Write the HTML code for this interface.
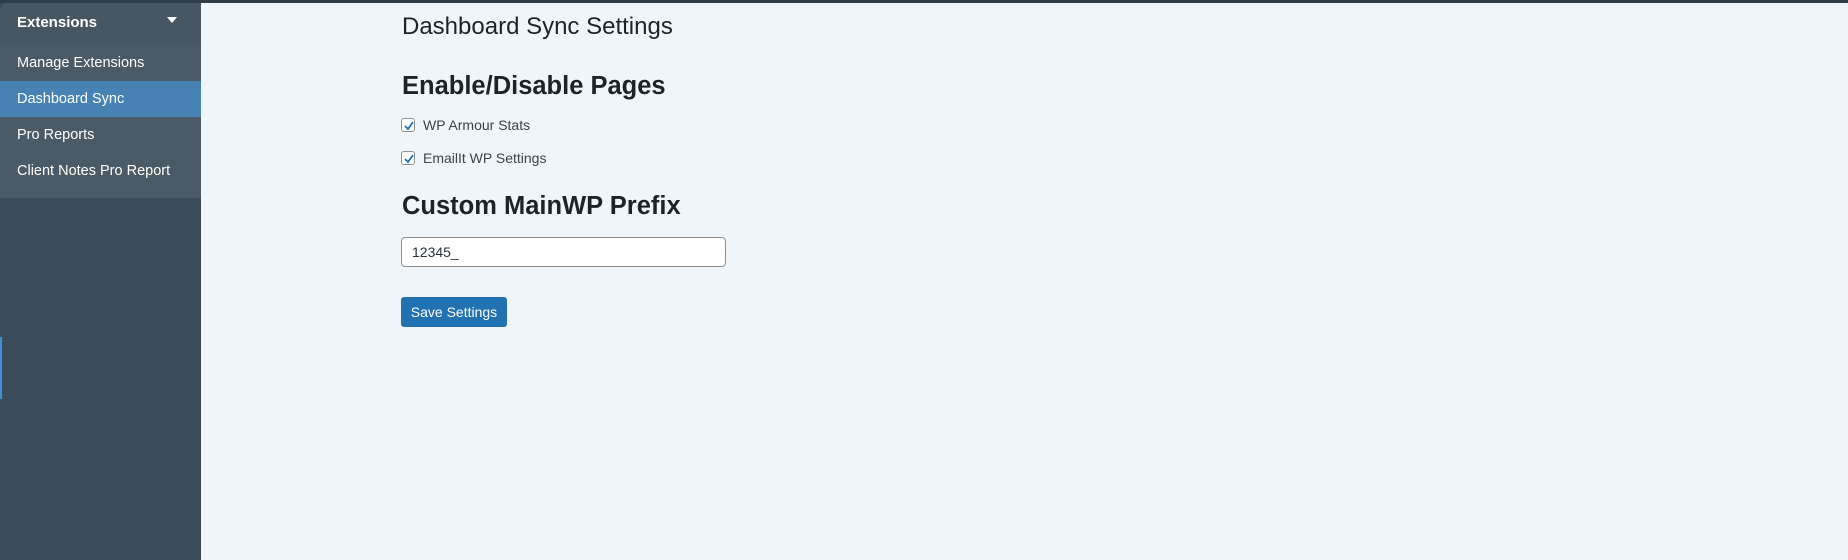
<!DOCTYPE html>
<html><head><meta charset="utf-8"><style>
*{box-sizing:border-box;margin:0;padding:0}
body{width:1848px;height:560px;background:#f0f5f9;font-family:"Liberation Sans",sans-serif;position:relative;overflow:hidden}
.top{position:absolute;left:0;top:0;width:1848px;height:3px;background:#2e3d48}
.side{position:absolute;left:0;top:3px;width:201px;height:557px;background:#3a4c59}
.menu{background:#4a5a66;border-top-left-radius:8px;height:195px}
.hd{height:42px;color:#fff;font-weight:bold;font-size:15px;padding:11px 0 0 17px;position:relative;background:#475762;border-top-left-radius:8px}
.hd:after{content:"";position:absolute;left:167px;top:14px;border-left:5px solid transparent;border-right:5px solid transparent;border-top:6px solid #fff}
.it{height:36px;color:#fff;font-size:14.5px;padding:10px 0 0 17px}
.it.act{background:#4682b4}
.ind{position:absolute;left:0;top:337px;width:2px;height:62px;background:#3d8fd8}
h1{position:absolute;left:402px;top:13px;font-weight:normal;font-size:24px;color:#1d2327}
h2{position:absolute;left:402px;font-size:25.5px;font-weight:bold;color:#1d2327}
.cb{position:absolute;left:401px;width:14px;height:14px;border:1px solid #8c8f94;border-radius:3px;background:#fff}
.cb svg{position:absolute;left:1px;top:1px}
.lb{position:absolute;left:423px;font-size:14px;color:#3c434a}
.inp{position:absolute;left:401px;top:237px;width:325px;height:30px;border:1px solid #8c8f94;border-radius:4px;background:#fff;font-size:14px;padding:6px 0 0 10px;color:#2c3338}
.btn{position:absolute;left:401px;top:297px;width:106px;height:30px;background:#2271b1;border-radius:3px;color:#fff;font-size:14px;text-align:center;padding-top:7px}
</style></head><body>
<div class="top"></div>
<div class="side"><div class="menu">
<div class="hd">Extensions</div>
<div class="it">Manage Extensions</div>
<div class="it act">Dashboard Sync</div>
<div class="it">Pro Reports</div>
<div class="it">Client Notes Pro Report</div>
</div></div>
<div class="ind"></div>
<h1>Dashboard Sync Settings</h1>
<h2 style="top:72px">Enable/Disable Pages</h2>
<div class="cb" style="top:118px"><svg width="12" height="12" viewBox="0 0 12 12"><path d="M2 6l3 3 5-7" stroke="#2271b1" stroke-width="1.8" fill="none"/></svg></div>
<div class="lb" style="top:117px">WP Armour Stats</div>
<div class="cb" style="top:151px"><svg width="12" height="12" viewBox="0 0 12 12"><path d="M2 6l3 3 5-7" stroke="#2271b1" stroke-width="1.8" fill="none"/></svg></div>
<div class="lb" style="top:150px">EmailIt WP Settings</div>
<h2 style="top:192px">Custom MainWP Prefix</h2>
<div class="inp">12345_</div>
<div class="btn">Save Settings</div>
</body></html>
